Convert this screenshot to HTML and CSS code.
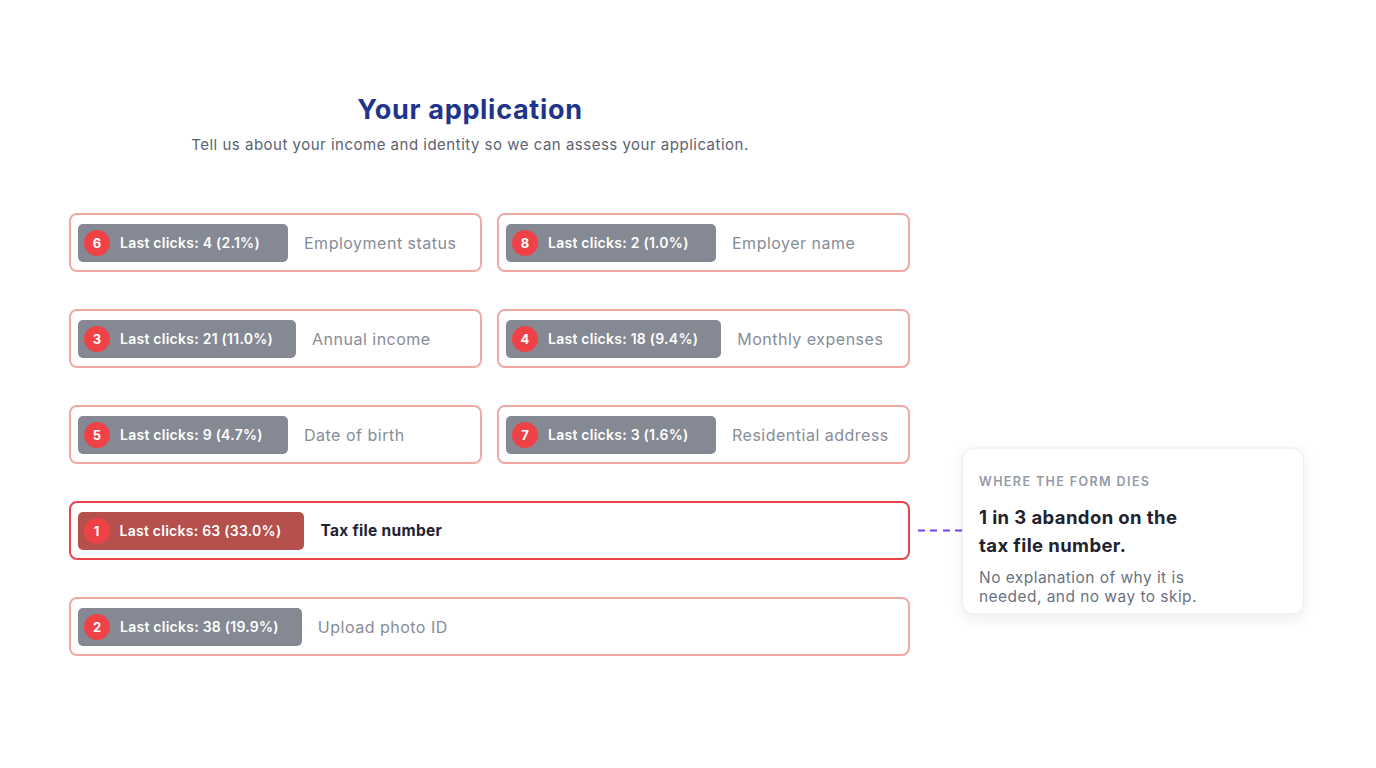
FILE: index.html
```html
<!DOCTYPE html>
<html lang="en">
<head>
<meta charset="utf-8">
<title>Your application</title>
<link rel="stylesheet" href="styles.css">
</head>
<body>
<main class="page">
  <header class="intro">
    <h1 class="title">Your application</h1>
    <p class="subtitle">Tell us about your income and identity so we can assess your application.</p>
  </header>
  <section class="fields">
    <div class="field">
      <span class="badge"><span class="rank">6</span>Last clicks: 4 (2.1%)</span>
      <span class="label">Employment status</span>
    </div>
    <div class="field">
      <span class="badge"><span class="rank">8</span>Last clicks: 2 (1.0%)</span>
      <span class="label">Employer name</span>
    </div>
    <div class="field">
      <span class="badge"><span class="rank">3</span>Last clicks: 21 (11.0%)</span>
      <span class="label">Annual income</span>
    </div>
    <div class="field">
      <span class="badge"><span class="rank">4</span>Last clicks: 18 (9.4%)</span>
      <span class="label">Monthly expenses</span>
    </div>
    <div class="field">
      <span class="badge"><span class="rank">5</span>Last clicks: 9 (4.7%)</span>
      <span class="label">Date of birth</span>
    </div>
    <div class="field">
      <span class="badge"><span class="rank">7</span>Last clicks: 3 (1.6%)</span>
      <span class="label">Residential address</span>
    </div>
    <div class="field field-wide field-hot">
      <span class="badge badge-hot"><span class="rank">1</span>Last clicks: 63 (33.0%)</span>
      <span class="label label-hot">Tax file number</span>
      <div class="callout">
        <span class="connector"></span>
        <div class="card">
          <div class="eyebrow">WHERE THE FORM DIES</div>
          <div class="headline">1 in 3 abandon on the tax file number.</div>
          <div class="body">No explanation of why it is needed, and no way to skip.</div>
        </div>
      </div>
    </div>
    <div class="field field-wide">
      <span class="badge"><span class="rank">2</span>Last clicks: 38 (19.9%)</span>
      <span class="label">Upload photo ID</span>
    </div>
  </section>
</main>
</body>
</html>
```
FILE: styles.css
```css
* { box-sizing: border-box; }
html, body { margin: 0; padding: 0; background: #ffffff; }
body {
  font-family: "Inter", "Noto Sans", "Liberation Sans", sans-serif;
  color: #1f2330;
}
.page {
  padding: 93px 0 0 69px;
  width: 910px;
}
.intro {
  width: 802px;
  text-align: center;
}
.title {
  margin: 0;
  font-size: 27px;
  line-height: 34px;
  font-weight: 700;
  color: #1f348a;
  letter-spacing: 0.7px;
}
.subtitle {
  margin: 7px 0 0;
  font-size: 15px;
  line-height: 22px;
  color: #5c6272;
  letter-spacing: 0.5px;
}
.fields {
  margin-top: 57px;
  display: grid;
  grid-template-columns: 1fr 1fr;
  column-gap: 15px;
  row-gap: 37px;
}
.field {
  position: relative;
  height: 59px;
  border: 2px solid #f2a9a4;
  border-radius: 8px;
  padding: 0 7px;
  display: flex;
  align-items: center;
  gap: 16px;
}
.field-wide { grid-column: 1 / -1; }
.field-hot { border: 2.5px solid #e8454b; padding: 0 6.5px; }
.badge {
  min-width: 210px;
  height: 38px;
  border-radius: 5px;
  background: #858993;
  color: #ffffff;
  font-size: 14px;
  font-weight: 600;
  display: flex;
  align-items: center;
  gap: 10px;
  padding: 0 23px 0 6px;
  white-space: nowrap;
  letter-spacing: 0.25px;
}
.badge-hot { background: #b5504d; }
.rank {
  width: 26px;
  height: 26px;
  border-radius: 50%;
  background: #ee4247;
  color: #ffffff;
  font-size: 13px;
  font-weight: 700;
  display: flex;
  align-items: center;
  justify-content: center;
  letter-spacing: 0;
}
.label {
  font-size: 16px;
  color: #878c98;
  white-space: nowrap;
  letter-spacing: 0.5px;
}
.label-hot {
  color: #1f2330;
  font-weight: 700;
  font-size: 15.5px;
  letter-spacing: 0.3px;
}
.callout {
  position: absolute;
  left: 100%;
  top: 50%;
  transform: translateY(-50%);
  display: flex;
  align-items: center;
}
.connector {
  width: 44px;
  margin-left: 10px;
  height: 2px;
  background: repeating-linear-gradient(90deg, #7c3aed 0 7px, transparent 7px 12.5px);
}
.card {
  width: 342px;
  background: #ffffff;
  border: 1px solid #ebecf0;
  border-radius: 12px;
  box-shadow: 0 4px 14px rgba(20, 24, 40, 0.08);
  padding: 24px 16px 7px;
}
.eyebrow {
  font-size: 12.5px;
  font-weight: 600;
  letter-spacing: 1.4px;
  color: #959aa6;
  line-height: 18px;
}
.headline {
  margin-top: 12px;
  width: 215px;
  font-size: 18.5px;
  font-weight: 700;
  line-height: 28px;
  color: #1f2330;
  letter-spacing: 0.4px;
}
.body {
  margin-top: 9px;
  width: 240px;
  font-size: 15.5px;
  line-height: 19.5px;
  color: #6c7180;
  letter-spacing: 0.45px;
}
```
